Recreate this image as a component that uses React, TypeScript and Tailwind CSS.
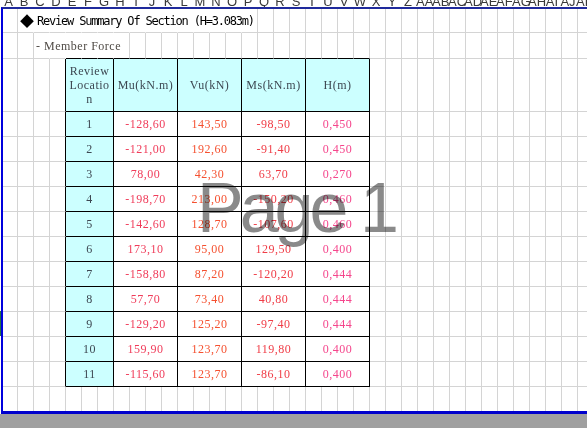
import type { ReactNode } from "react";
import clsx from "clsx";

const COLS = 37;

const colName = (i: number) =>
  i < 26 ? String.fromCharCode(65 + i) : "A" + String.fromCharCode(65 + i - 26);

type Edge = "g" | "k" | "t" | "n";

// one sheet cell: right/bottom border colour (gray grid, black table, transparent, none)
const edges = (right: Edge, bottom: Edge) =>
  clsx(
    right !== "n" && "border-r",
    right === "g" && "border-r-[#d4d4d4]",
    right === "k" && "border-r-black",
    right === "t" && "border-r-transparent",
    bottom !== "n" && "border-b",
    bottom === "g" && "border-b-[#d4d4d4]",
    bottom === "k" && "border-b-black",
    bottom === "t" && "border-b-transparent"
  );

const rows = [
  ["-128,60", "143,50", "-98,50", "0,450"],
  ["-121,00", "192,60", "-91,40", "0,450"],
  ["78,00", "42,30", "63,70", "0,270"],
  ["-198,70", "213,00", "-150,20", "0,460"],
  ["-142,60", "128,70", "-107,60", "0,460"],
  ["173,10", "95,00", "129,50", "0,400"],
  ["-158,80", "87,20", "-120,20", "0,444"],
  ["57,70", "73,40", "40,80", "0,444"],
  ["-129,20", "125,20", "-97,40", "0,444"],
  ["159,90", "123,70", "119,80", "0,400"],
  ["-115,60", "123,70", "-86,10", "0,400"],
];

const valueColors = ["text-[#f03c5a]", "text-[#f5502f]", "text-[#f03c46]", "text-[#f5468c]"];

const serif = "font-['Liberation_Serif',serif] text-[12px] tracking-[0.5px]";

function plain(key: string, right: Edge = "g", bottom: Edge = "g", content?: ReactNode) {
  return (
    <div key={key} className={clsx("relative whitespace-nowrap", edges(right, bottom))}>
      {content}
    </div>
  );
}

function TitleRow() {
  const cells = [];
  for (let c = 0; c < COLS; c++) {
    const content =
      c === 1 ? (
        <div className="absolute left-0 top-0 z-10 flex h-full items-center pl-[2px] font-['DejaVu_Sans_Mono',monospace] text-[12px] tracking-[-1.2px] text-black">
          <span className="inline-block w-[17px] font-['Noto_Sans_CJK_JP',sans-serif] text-[14px] tracking-normal">◆</span>
          Review Summary Of Section (H=3.083m)
        </div>
      ) : null;
    cells.push(plain(`t${c}`, c >= 1 && c <= 14 ? "t" : "g", "g", content));
  }
  return <>{cells}</>;
}

function SubTitleRow() {
  const cells = [];
  for (let c = 0; c < COLS; c++) {
    const content =
      c === 2 ? (
        <div className={clsx("absolute left-0 top-0 z-10 flex h-full items-center pl-[2px] text-[#4f4a45]", serif, "tracking-[0.2px]")}>
          - Member Force
        </div>
      ) : null;
    cells.push(plain(`s${c}`, c >= 2 && c <= 6 ? "t" : "g", c >= 4 && c <= 22 ? "k" : "g", content));
  }
  return <>{cells}</>;
}

function TableRow({ r, header }: { r: number; header?: boolean }) {
  const cells: ReactNode[] = [];
  for (let c = 0; c < 3; c++) cells.push(plain(`r${r}c${c}`));
  cells.push(plain(`r${r}c3`, "k", "g"));

  const base = clsx("flex items-center justify-center text-center", serif, edges("k", "k"));
  if (header) {
    cells.push(
      <div key="h0" className={clsx(base, "col-span-3 bg-[#ccffff] leading-[14px] text-[#3d4852]")}>
        Review
        <br />
        Locatio
        <br />n
      </div>
    );
    ["Mu(kN.m)", "Vu(kN)", "Ms(kN.m)", "H(m)"].forEach((h) =>
      cells.push(
        <div key={h} className={clsx(base, "col-span-4 bg-[#ccffff] text-[#3d4852] tracking-[0.2px]")}>
          {h}
        </div>
      )
    );
  } else {
    const data = rows[r];
    cells.push(
      <div key="n" className={clsx(base, "col-span-3 bg-[#ccffff] text-[#3d4852]")}>
        {r + 1}
      </div>
    );
    data.forEach((v, i) =>
      cells.push(
        <div key={i} className={clsx(base, "col-span-4 bg-white", valueColors[i])}>
          {v}
        </div>
      )
    );
  }
  for (let c = 23; c < COLS; c++) cells.push(plain(`r${r}c${c}`));
  return <>{cells}</>;
}

export default function App() {
  return (
    <div className="relative h-[428px] w-[587px] overflow-hidden bg-white">
      {/* Column headers, mostly scrolled off */}
      <div className="ml-[1px] flex h-[7px] overflow-hidden">
        {Array.from({ length: COLS }, (_, i) => (
          <div
            key={i}
            className={clsx(
              "shrink-0 text-center font-['Liberation_Sans',sans-serif] text-[13px] leading-[13px] text-[#3a3a3a] -mt-[5px]",
              i === 0 ? "w-[15px]" : "w-[16px]"
            )}
          >
            {colName(i)}
          </div>
        ))}
      </div>

      <div className="flex">
        {/* Row header edge */}
        <div className="flex w-[1px] shrink-0 flex-col">
          <div className="h-[304px]" />
          <div className="h-[25px] bg-[#217346]" />
        </div>

        {/* Page area */}
        <div className="flex-1 overflow-hidden border-b-[3px] border-l-2 border-t-2 border-b-[#0000cc] border-l-[#0000dd] border-t-[#1f2a9c]">
          <div className="grid grid-cols-[15px_repeat(36,16px)] grid-rows-[24px_26px_53px_repeat(11,25px)_24px]">
            <TitleRow />
            <SubTitleRow />
            <TableRow r={-1} header />
            {rows.map((_, r) => (
              <TableRow key={r} r={r} />
            ))}
            {Array.from({ length: COLS }, (_, c) => plain(`b${c}`, "g", "n"))}
          </div>
        </div>
      </div>

      <div className="h-[14px] bg-[#a0a0a0]" />

      {/* Page break preview watermark */}
      <div className="pointer-events-none absolute left-[197px] top-[173px] font-['Liberation_Sans',sans-serif] text-[70px] leading-[70px] tracking-[-4px] text-[#8a8a8a] mix-blend-multiply">
        Page 1
      </div>
    </div>
  );
}
